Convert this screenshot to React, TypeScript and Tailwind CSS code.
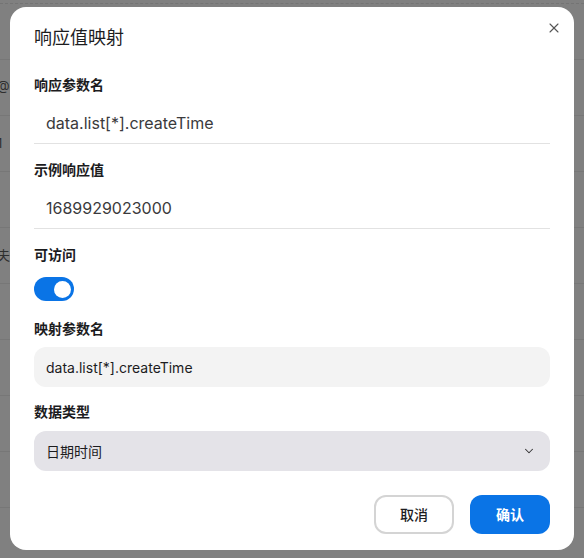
import { ChevronDown, X } from 'lucide-react';

const font = { fontFamily: 'Inter, "Noto Sans CJK SC", sans-serif' };

const bgRows = ['', '@0', '1', '', '夫', '', '', '', '', ''];

const Label = ({ children }: { children: React.ReactNode }) => (
  <div className="text-[14px] font-semibold leading-5 text-[#1c1c1e]">{children}</div>
);

export default function App() {
  return (
    <div className="relative h-[558px] w-[584px] overflow-hidden bg-[#808080]" style={font}>
      {/* page behind the overlay */}
      <div className="mt-[3px] flex flex-col border-t border-dashed border-[#747474]">
        {bgRows.map((t, i) => (
          <div
            key={i}
            className="flex h-[56px] items-center border-b border-[#777777] text-[13px] text-[#2e2e2e]"
          >
            {t && <span className="-ml-[3px]">{t}</span>}
          </div>
        ))}
      </div>

      {/* Modal */}
      <div className="absolute left-[10px] top-[7px] flex h-[543px] w-[564px] flex-col rounded-[16px] bg-white px-6 pt-5">
        <div className="flex items-start justify-between">
          <h2 className="text-[18px] font-normal leading-[22px] text-[#1c1c1e]">响应值映射</h2>
          <button className="-mr-[12px] -mt-[7px] text-[#555]">
            <X className="h-4 w-4" strokeWidth={1.6} />
          </button>
        </div>

        <div className="mt-[26px]">
          <Label>响应参数名</Label>
          <div className="mt-[16px] border-b border-[#e2e2e2] px-3 pb-[8px] text-[16px] leading-6 text-[#3a3a3c]">
            data.list[*].createTime
          </div>
        </div>

        <div className="mt-[16px]">
          <Label>示例响应值</Label>
          <div className="mt-[16px] border-b border-[#e2e2e2] px-3 pb-[8px] text-[16px] leading-6 text-[#3a3a3c]">
            1689929023000
          </div>
        </div>

        <div className="mt-[16px]">
          <Label>可访问</Label>
          <div className="mt-[12px] flex h-[24px] w-[40px] items-center justify-end rounded-full bg-[#0a74e6] px-[3px]">
            <div className="h-[17px] w-[17px] rounded-full bg-white" />
          </div>
        </div>

        <div className="mt-[18px]">
          <Label>映射参数名</Label>
          <div className="mt-[8px] flex h-[40px] items-center rounded-[12px] bg-[#f3f3f3] px-3 text-[14px] text-[#1c1c1e]">
            data.list[*].createTime
          </div>
        </div>

        <div className="mt-[15px]">
          <Label>数据类型</Label>
          <div className="mt-[9px] flex h-[40px] items-center justify-between rounded-[12px] bg-[#e4e3e8] px-3 text-[14px] text-[#1c1c1e]">
            <span>日期时间</span>
            <ChevronDown className="mr-[2px] h-[14px] w-[14px] text-[#333]" strokeWidth={1.8} />
          </div>
        </div>

        <div className="mt-[24px] flex justify-end gap-4">
          <button className="h-[39px] w-[80px] rounded-[12px] border-2 border-[#d4d4d4] bg-white text-[14px] font-medium text-[#1c1c1e]">
            取消
          </button>
          <button className="h-[39px] w-[80px] rounded-[12px] bg-[#0a74e6] text-[14px] font-semibold text-white">
            确认
          </button>
        </div>
      </div>
    </div>
  );
}
